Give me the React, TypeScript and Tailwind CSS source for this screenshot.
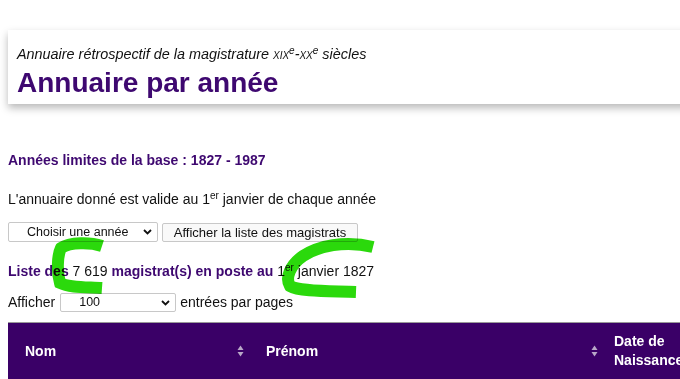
import React from "react";

const Chevron = () => (
  <svg width="9" height="6" viewBox="0 0 9 6" className="shrink-0">
    <path d="M1 1 L4.5 4.5 L8 1" fill="none" stroke="#111" strokeWidth="1.8" />
  </svg>
);

const Sort = () => (
  <svg width="7" height="12" viewBox="0 0 7 12" className="shrink-0">
    <path d="M3.5 0.5 L6.5 5 L0.5 5 Z" fill="#b9a8c8" />
    <path d="M0.5 7 L6.5 7 L3.5 11.5 Z" fill="#b9a8c8" />
  </svg>
);

export default function App() {
  return (
    <div
      className="relative w-[680px] h-[379px] overflow-hidden bg-white text-[#111]"
      style={{ fontFamily: '"Liberation Sans", Arial, sans-serif' }}
    >
      <div className="pl-2 pt-[30px]">
        <div className="w-[720px] h-[74px] bg-white shadow-[0_4px_8px_rgba(0,0,0,0.28)] pl-[9px] pt-[16px]">
          <div className="italic text-[14.4px] leading-[16px]">
            Annuaire rétrospectif de la magistrature{" "}
            <span className="[font-variant:small-caps]">xix</span>
            <sup className="text-[10px]">e</sup>-
            <span className="[font-variant:small-caps]">xx</span>
            <sup className="text-[10px]">e</sup> siècles
          </div>
          <div className="font-bold text-[28px] leading-[34px] text-[#3e0870] mt-[4px]">
            Annuaire par année
          </div>
        </div>

        <div className="mt-[48px] font-bold text-[14px] leading-[16px] text-[#3e0870]">
          Années limites de la base : 1827 - 1987
        </div>

        <div className="mt-[23px] text-[14px] leading-[16px]">
          L'annuaire donné est valide au 1<sup className="text-[10px]">er</sup> janvier de chaque année
        </div>

        <div className="mt-[15px] flex items-center gap-[4px] leading-[15px]">
          <div className="w-[150px] h-[20px] border border-[#c8c8c8] rounded-[2px] flex items-center pl-[18px] pr-[5px] bg-white text-[12.5px]">
            <span className="flex-1">Choisir une année</span>
            <Chevron />
          </div>
          <div className="w-[196px] h-[19px] border border-[#c8c8c8] rounded-[2px] flex items-center justify-center bg-[#f9f9f9] text-[13px]">
            Afficher la liste des magistrats
          </div>
        </div>

        <div className="mt-[21px] text-[14px] leading-[16px]">
          <b className="text-[#3e0870]">Liste des </b>7 619
          <b className="text-[#3e0870]"> magistrat(s) en poste au </b>1
          <sup className="text-[10px]">er</sup> janvier 1827
        </div>

        <div className="mt-[13px] flex items-center gap-[4px] text-[14px]">
          <span className="mr-[1px]">Afficher</span>
          <div className="w-[116px] h-[19px] border border-[#c8c8c8] rounded-[2px] flex items-center pl-[18px] pr-[5px] text-[12.5px] bg-white">
            <span className="flex-1">100</span>
            <Chevron />
          </div>
          <span>entrées par pages</span>
        </div>

        <div className="mt-[9px] w-[800px] h-[60px] bg-[#3a0067] border-t border-[#999] flex text-white font-bold text-[14px] leading-[19px]">
          <div className="w-[242px] flex items-center pl-[17px] pr-[6px] pb-[3px]">
            <span className="flex-1">Nom</span>
            <Sort />
          </div>
          <div className="w-[356px] flex items-center pl-[16px] pr-[8px] pb-[3px]">
            <span className="flex-1">Prénom</span>
            <Sort />
          </div>
          <div className="flex items-center pl-[8px] pb-[3px]">
            <span>
              Date de
              <br />
              Naissance
            </span>
          </div>
        </div>
      </div>

      <svg
        className="absolute left-0 top-0 pointer-events-none mix-blend-multiply"
        width="680"
        height="379"
      >
        <path
          d="M102 246 C90 242 70 242 61 248 C57 256 57 273 60 283 C70 288 88 287 102 288"
          fill="none"
          stroke="#2bd90c"
          strokeWidth="12"
          strokeLinecap="butt"
        />
        <path
          d="M373 247 C345 240 318 246 303 256 C290 265 285 278 290 286 C300 292 330 291 356 292"
          fill="none"
          stroke="#2bd90c"
          strokeWidth="12"
          strokeLinecap="butt"
        />
      </svg>
    </div>
  );
}
